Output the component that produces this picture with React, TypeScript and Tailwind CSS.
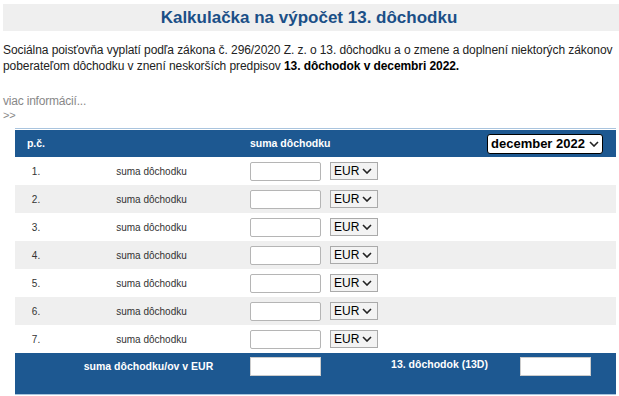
import React from 'react';

const rows = [1, 2, 3, 4, 5, 6, 7];

const Chevron = () => (
  <svg width="10" height="6" viewBox="0 0 10 6" className="shrink-0">
    <path d="M1 1l4 4 4-4" fill="none" stroke="#222" strokeWidth="1.6" />
  </svg>
);

const App = () => (
  <div className="w-[619px] h-[396px] overflow-hidden bg-white pt-[4px] pl-[3px] font-['Liberation_Sans',Tahoma,sans-serif] text-[#222]">
    <div className="h-[27px] bg-[#efefef] flex items-center justify-center">
      <h1 className="text-[17px] font-bold text-[#1b4f87] pr-[4px]">Kalkulačka na výpočet 13. dôchodku</h1>
    </div>

    <p className="mt-[11px] text-[12px] leading-[16px] tracking-[-0.08px] text-[#222]">
      Sociálna poisťovňa vyplatí podľa zákona č. 296/2020 Z. z. o 13. dôchodku a o zmene a doplnení niektorých zákonov
      <br />
      poberateľom dôchodku v znení neskorších predpisov <b className="text-black">13. dôchodok v decembri 2022.</b>
    </p>

    <div className="mt-[20px] text-[12px] leading-[15px] tracking-[-0.2px] text-[#888]">
      <div>viac informácií...</div>
      <div className="text-[11px] leading-[12px]">&gt;&gt;</div>
    </div>

    <div className="ml-[12px] mt-[7px] w-[601px] border-t border-[#a9c4de]">
      <div className="h-[27px] mt-[1px] bg-[#1d5891] flex items-center text-white text-[10.5px] font-bold">
        <div className="w-[42px] text-center">p.č.</div>
        <div className="w-[193px]" />
        <div className="flex-1">suma dôchodku</div>
        <div className="mr-[13px] h-[20px] w-[116px] bg-white border-[1.5px] border-black rounded-[3px] flex items-center justify-between px-[3px] text-black text-[13px] font-bold whitespace-nowrap">
          <span>december 2022</span>
          <Chevron />
        </div>
      </div>

      {rows.map((n) => (
        <div
          key={n}
          className={`h-[28px] flex items-center text-[10px] text-[#333] ${n % 2 === 0 ? 'bg-[#efefef]' : 'bg-white'}`}
        >
          <div className="w-[42px] text-center">{n}.</div>
          <div className="w-[193px] text-center pr-[4px]">suma dôchodku</div>
          <div className="w-[71px] h-[19px] bg-white border border-[#b5b5b5] rounded-[2px]" />
          <div className="ml-[9px] w-[48px] h-[18px] bg-[#f3f3f3] border border-[#aaa] flex items-center justify-between pl-[3px] pr-[5px] text-[12px] text-black">
            <span>EUR</span>
            <Chevron />
          </div>
        </div>
      ))}

      <div className="h-[42px] bg-[#1d5891] flex items-start pt-[4px] text-white text-[10.5px] font-bold border-b border-[#a9c4de]">
        <div className="w-[235px] pl-[32px] text-center leading-[19px]">suma dôchodku/ov v EUR</div>
        <div className="w-[71px] h-[19px] bg-white border border-[#ccc]" />
        <div className="w-[199px] text-center leading-[16px] -mt-[1px] pl-[38px]">13. dôchodok (13D)</div>
        <div className="w-[71px] h-[19px] bg-white border border-[#ccc]" />
      </div>
    </div>
  </div>
);

export default App;
